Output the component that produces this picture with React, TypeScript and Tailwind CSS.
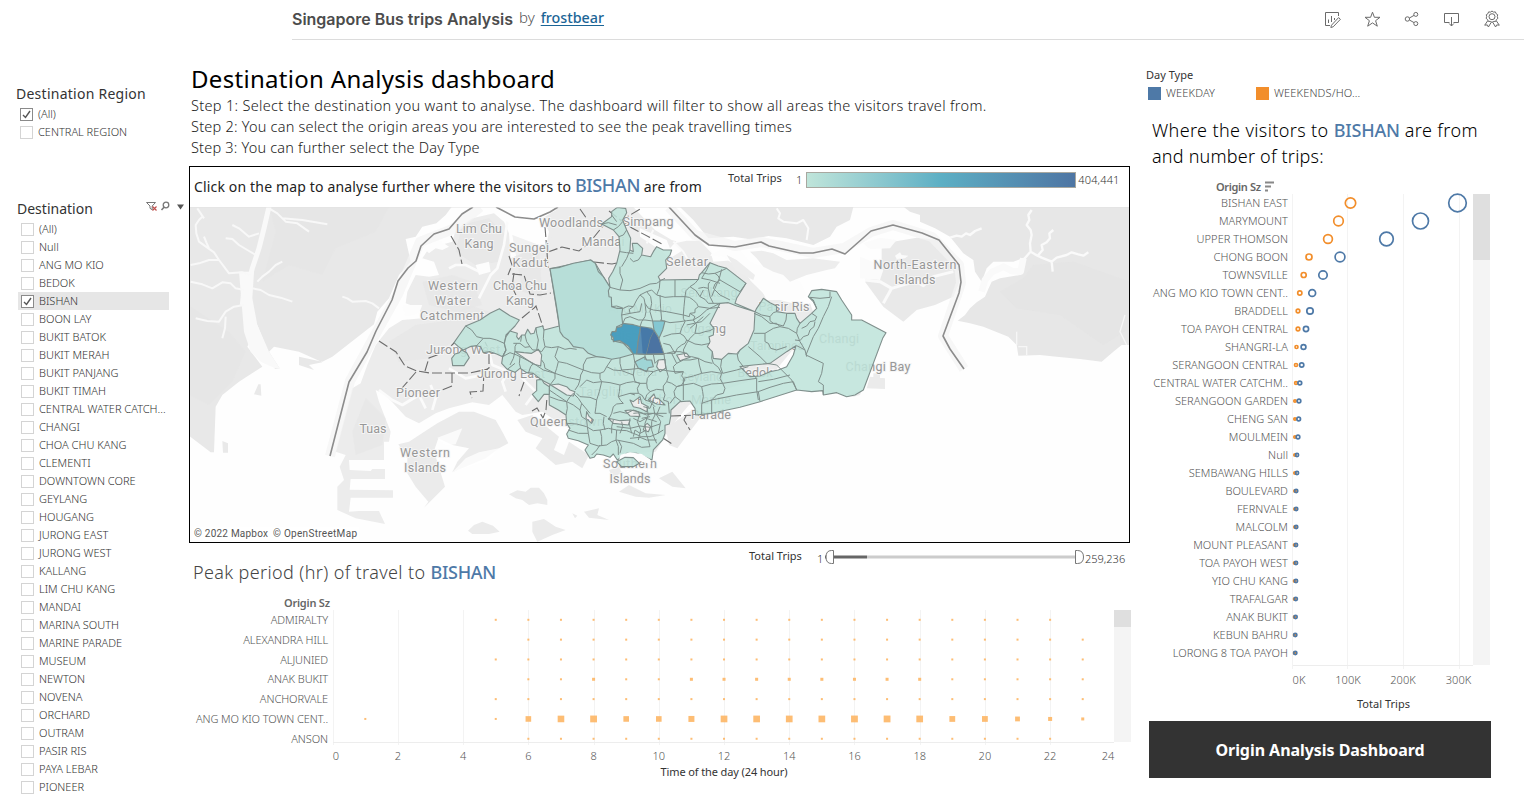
import React from "react";

const regions = ["(All)", "CENTRAL REGION"];

const destinations = [
  "(All)", "Null", "ANG MO KIO", "BEDOK", "BISHAN", "BOON LAY", "BUKIT BATOK", "BUKIT MERAH",
  "BUKIT PANJANG", "BUKIT TIMAH", "CENTRAL WATER CATCH...", "CHANGI", "CHOA CHU KANG", "CLEMENTI",
  "DOWNTOWN CORE", "GEYLANG", "HOUGANG", "JURONG EAST", "JURONG WEST", "KALLANG", "LIM CHU KANG",
  "MANDAI", "MARINA SOUTH", "MARINE PARADE", "MUSEUM", "NEWTON", "NOVENA", "ORCHARD", "OUTRAM",
  "PASIR RIS", "PAYA LEBAR", "PIONEER",
];

// name, weekend x, weekend radius, weekday x, weekday radius
const origins: [string, number, number, number, number][] = [
  ["BISHAN EAST", 1350.5, 5.2, 1457.5, 8.8],
  ["MARYMOUNT", 1338.5, 4.8, 1420.5, 8],
  ["UPPER THOMSON", 1328, 4.4, 1386.5, 6.8],
  ["CHONG BOON", 1309, 3, 1340, 4.9],
  ["TOWNSVILLE", 1303.7, 2.5, 1323, 4.2],
  ["ANG MO KIO TOWN CENT..", 1299.8, 2.1, 1312.2, 3.4],
  ["BRADDELL", 1298, 1.8, 1310, 3.2],
  ["TOA PAYOH CENTRAL", 1298, 1.8, 1306, 2.6],
  ["SHANGRI-LA", 1296.5, 1.5, 1303.5, 2.4],
  ["SERANGOON CENTRAL", 1296, 1.5, 1301.7, 2.1],
  ["CENTRAL WATER CATCHM..", 1296, 1.4, 1299.8, 1.9],
  ["SERANGOON GARDEN", 1295, 1.2, 1299, 1.8],
  ["CHENG SAN", 1295, 1.2, 1298.7, 1.8],
  ["MOULMEIN", 1295, 1.2, 1298, 1.8],
  ["Null", 1295, 1.2, 1297, 1.6],
  ["SEMBAWANG HILLS", 1295, 1.2, 1297, 1.6],
  ["BOULEVARD", 1295, 1.2, 1296.2, 1.6],
  ["FERNVALE", 1295, 1.2, 1296.2, 1.6],
  ["MALCOLM", 1295, 1.2, 1296.2, 1.6],
  ["MOUNT PLEASANT", 1294.7, 1.2, 1296, 1.6],
  ["TOA PAYOH WEST", 1294.7, 1.2, 1296, 1.6],
  ["YIO CHU KANG", 1294.7, 1.2, 1296, 1.6],
  ["TRAFALGAR", 1294.7, 1.2, 1295.8, 1.6],
  ["ANAK BUKIT", 1294.7, 1.2, 1295.6, 1.6],
  ["KEBUN BAHRU", 1294.7, 1.2, 1295.3, 1.6],
  ["LORONG 8 TOA PAYOH", 1294.7, 1.2, 1295.3, 1.6],
];

const small = (from: number, to: number) =>
  Array.from({ length: to - from + 1 }, (_, i): [number, number] => [from + i, 2]);

const peaks: { name: string; marks: [number, number][] }[] = [
  { name: "ADMIRALTY", marks: small(5, 22) },
  { name: "ALEXANDRA HILL", marks: small(6, 23) },
  { name: "ALJUNIED", marks: small(5, 23) },
  {
    name: "ANAK BUKIT",
    marks: small(6, 23).map(([h, s]): [number, number] => [h, h === 8 || (h > 10 && h < 19) ? 3 : s]),
  },
  { name: "ANCHORVALE", marks: small(5, 23) },
  {
    name: "ANG MO KIO TOWN CENT..",
    marks: [
      [1, 2], [5, 2], [6, 5.6], [7, 6.6], [8, 6.8], [9, 5.6], [10, 5.6], [11, 6], [12, 6.7], [13, 6.7],
      [14, 6.7], [15, 6.7], [16, 6.8], [17, 6.8], [18, 6.7], [19, 5.8], [20, 5.8], [21, 4.8], [22, 4], [23, 3],
    ],
  },
  { name: "ANSON", marks: small(6, 22) },
];

const mapLabels: [string, number, number, number][] = [
  ["Lim Chu", 479, 233, 46], ["Kang", 479, 248, 29], ["Sungei", 529, 252, 40], ["Kadut", 530, 267, 35],
  ["Woodlands", 571, 227, 64], ["Simpang", 648, 226, 51], ["Mandai", 603, 246, 43], ["Seletar", 687, 266, 42],
  ["Western", 453, 290, 50], ["Water", 453, 305, 36], ["Catchment", 452, 320, 64], ["Choa Chu", 520, 290, 54],
  ["Kang", 520, 305, 28], ["Jurong West", 463, 354, 74], ["Jurong East", 511, 378, 68], ["Pioneer", 418, 397, 44],
  ["Tuas", 373, 433, 27], ["Western", 425, 457, 50], ["Islands", 425, 472, 42], ["Queenstown", 567, 426, 74],
  ["Novena", 635, 376, 44], ["Tanglin", 601, 396, 44], ["Bishan", 633, 340, 38], ["Ang Mo Kio", 640, 313, 64],
  ["Sengkang", 709, 297, 57], ["Hougang", 700, 333, 52], ["Pasir Ris", 784, 311, 51], ["Tampines", 777, 350, 54],
  ["Bedok", 755, 377, 35], ["Changi", 839, 343, 40], ["Changi Bay", 878, 371, 65], ["Geylang", 701, 381, 44],
  ["Marine", 711, 404, 40], ["Parade", 711, 419, 40], ["Rochor", 657, 404, 40], ["Southern", 630, 468, 54],
  ["Islands", 630, 483, 41], ["North-Eastern", 915, 269, 83], ["Islands", 915, 284, 41],
];

function Checkbox({ checked }: { checked: boolean }) {
  return (
    <span className={`flex h-[13px] w-[13px] shrink-0 items-center justify-center border bg-white ${checked ? "border-[#8a8a8a]" : "border-[#d4d4d4]"}`}>
      {checked && (
        <svg width="9" height="9" viewBox="0 0 9 9" fill="none" stroke="#555" strokeWidth="1.4">
          <path d="M1 5 L3.5 7.5 L8 1" />
        </svg>
      )}
    </span>
  );
}

function Header() {
  return (
    <header className="ml-[292px] flex h-10 items-start justify-between border-b border-[#dcdcdc] pr-[23px]">
      <div className="flex h-10 items-center gap-[6px] pb-[3px] whitespace-nowrap">
        <h1 className="font-['Inter','Liberation_Sans',sans-serif] text-[16px] font-semibold tracking-[-0.01px] text-[#4c4c4c]">Singapore Bus trips Analysis</h1>
        <span className="-mt-[2px] text-[15px] font-light text-[#555]">by</span>
        <a className="-mt-[2px] text-[14.3px] font-medium text-[#1b6596] underline underline-offset-2">frostbear</a>
      </div>
      <div className="flex h-[38px] items-center gap-[23px] text-[#6b6b6b]">
        <svg width="17" height="17" viewBox="0 0 17 17" fill="none" stroke="currentColor">
          <path d="M14.5 5V1.5H1.5V14.5H6M4.5 8.5V12M7.5 5V11M10.5 7V9" />
          <path d="M7.5 14.2L14.6 6.6L16.4 8.3L9.2 15.8L6.8 16.5Z" />
        </svg>
        <svg width="17" height="17" viewBox="0 0 17 17" fill="none" stroke="currentColor">
          <path d="M8.5 1.2L10.4 6.3H16L11.6 9.7L13.3 15.2L8.5 11.9L3.7 15.2L5.4 9.7L1 6.3H6.6Z" />
        </svg>
        <svg width="16" height="16" viewBox="0 0 16 16" fill="none" stroke="currentColor">
          <circle cx="3.4" cy="8" r="2.2" /><circle cx="11.8" cy="3.4" r="2" /><circle cx="11.8" cy="12.6" r="2" />
          <path d="M5.4 7L10 4.4M5.4 9L10 11.6" />
        </svg>
        <svg width="17" height="16" viewBox="0 0 17 16" fill="none" stroke="currentColor">
          <path d="M6.5 11.5H1.5V2.5H15.5V11.5H10.5M8.5 6V15M6.2 12.5L8.5 15L10.8 12.5" />
        </svg>
        <svg width="18" height="18" viewBox="0 0 18 18" fill="none" stroke="currentColor">
          <path d="M9 1L10.5 2.1L12.4 1.9L13.1 3.7L14.7 4.7L14.3 6.6L14.9 8.3L13.4 9.6L12.8 11.4H10.9L9 12.3L7.3 11.4H5.3L4.6 9.6L3.1 8.3L3.7 6.6L3.3 4.7L4.9 3.7L5.6 1.9L7.5 2.1Z" />
          <circle cx="9" cy="6.7" r="3" />
          <path d="M4.7 10.8L1.7 15.2L4.3 14.9L5.4 17L8.3 12.2M13.3 10.8L16.3 15.2L13.7 14.9L12.6 17L9.7 12.2" />
        </svg>
      </div>
    </header>
  );
}

function Sidebar() {
  return (
    <aside className="w-[189px] shrink-0 text-[#333]">
      <h2 className="ml-4 mt-11 text-[14px] leading-5 tracking-[0.25px]">Destination Region</h2>
      <ul className="ml-5 mt-px text-[11px] font-light text-[#333]">
        {regions.map((r, i) => (
          <li key={r} className="flex h-[18px] items-center gap-[5px]">
            <Checkbox checked={i === 0} />
            {r}
          </li>
        ))}
      </ul>
      <div className="ml-[17px] mt-[58px] flex h-5 items-center">
        <h2 className="w-[128px] text-[14px] leading-5">Destination</h2>
        <svg width="40" height="14" viewBox="0 0 40 14" fill="none" stroke="#777" className="-mt-1 ml-px">
          <path d="M.5 2.5H9.5L6.2 6V9.8L4 8.3V6Z" /><path d="M6.500 6.500L10.500 10.500M10.500 6.500L6.500 10.500" stroke="#c0504d" strokeWidth="1.2" />
          <circle cx="20" cy="5" r="2.8" strokeWidth="1.3" /><path d="M18 7.2L15.5 10" strokeWidth="1.5" />
          <path d="M31 4.5H38L34.5 9.5Z" fill="#555" stroke="none" />
        </svg>
      </div>
      <ul className="ml-[18px] mt-px w-[151px] text-[11px] font-light">
        {destinations.map((d) => (
          <li key={d} className={`flex h-[18px] items-center gap-[5px] pl-[3px] whitespace-nowrap ${d === "BISHAN" ? "bg-[#e6e6e6]" : ""}`}>
            <Checkbox checked={d === "BISHAN"} />
            {d}
          </li>
        ))}
      </ul>
    </aside>
  );
}

function SingaporeMap() {
  return (
    <svg width="939" height="335" viewBox="190 207 939 335" className="block bg-[#fefefe]">
      {/* Johor west and the western half of the island */}
      <g transform="translate(189 165) scale(.33333)">
        <path fill="#e8e8e8" d="M0 123H790L770 150L742 175L700 185L680 215L650 222L665 290L630 330L600 400L565 440L555 478L430 575L400 590L330 575L330 600L375 615L360 600L400 592L330 560L255 545L240 560L272 610L258 612L205 480L175 545L220 605L150 650L100 690L80 725L75 862L65 862L0 812Z" />
        <path fill="#e4e4e4" d="M240 125H600L560 200L440 250L400 330L300 300L220 350L260 200Z M0 420L120 500L170 560L130 650L60 720L0 690Z" opacity=".45" />
        <path fill="none" stroke="#f9f9f9" strokeWidth="15" strokeLinejoin="round" d="M240 125L225 190L210 250L190 310L182 340L165 370L160 420" />
        <path fill="#f9f9f9" d="M150 320H195L190 400L205 480L240 560L272 610H258L215 590L185 560L165 500Z" />
        <path fill="none" stroke="#f8f8f8" strokeWidth="6" strokeLinejoin="round" d="M185 330L160 322L120 325L105 305L90 285L75 262L55 248L30 230L22 205L20 180L30 165L40 155M60 250L52 232L45 215M90 285L60 285L30 295L5 300M165 375L140 370L125 355L100 352L70 370L40 358L5 350M165 420L135 425L110 440L90 470L55 468L20 460M190 370L215 375L240 390L275 398L310 410M240 130L265 145L290 170L325 175L360 200M205 350L220 335L240 320L260 300L280 290M200 270L175 255L150 240L130 222L110 220M110 455L108 490L100 520M130 180L150 190L180 215L210 205M460 395L475 400L490 410L530 408L550 415L570 430M280 160L340 165L415 178M25 130L45 160" />
        <path fill="#e9e9e9" d="M195 688L208 658H215L217 692ZM100 828L117 835V863H102Z" />
        <path fill="#ececec" d="M850 160L915 145L945 170L960 205L965 280L1010 260L1070 250L1080 200L1060 160L1120 124L1733 400V605L1500 720L1450 780L1400 860L1250 870L1200 820L1120 780L1060 740L1000 750L980 740L940 690L900 720L850 712L780 730L740 745L690 775L650 755L590 690L560 675L570 710L605 800L600 830H585V885H480L482 915L545 918L550 912H588V942H485L482 974L612 976V998H485L480 1040L510 1038H570L588 1077L500 1060L445 1035L445 965L465 945L452 905L470 870L440 860L490 670L515 655L535 600L560 540L600 490L640 465L700 460L690 430L650 415L655 380L680 330L720 335L750 330L735 290L700 280L720 250L790 230L800 195Z" />
        <path fill="#e4e4e4" opacity=".5" d="M680 480L760 470L840 420L900 440L790 530L720 580L630 590L600 530ZM820 180L900 160L950 210L930 290L860 300L800 260Z" />
        <path fill="#e6e6e6" opacity=".55" d="M700 350L790 330L850 350L880 420L800 440L720 420ZM970 210L1050 240L1060 400L1000 380ZM530 700L590 760L580 840L500 870L490 800Z" />
        <path fill="none" stroke="#fbfbfb" strokeWidth="8" strokeLinejoin="round" d="M955 170L945 240L925 310L905 330L890 360L870 400M780 310L800 300L830 300L870 320M780 610L830 640L880 630M900 560L910 600L960 620L940 650L950 680M570 675L610 705L640 720L690 690L710 730M725 660L740 700L730 735M1000 640L1040 680L1010 720" />
        <path fill="#fdfdfd" d="M700 245L725 222L750 225L780 245L760 255L740 250L720 265ZM640 420L700 420L690 445L650 455ZM860 300L900 290L905 320L870 330Z" />
        <path fill="#ebebeb" d="M628 838L660 830L745 775L810 740L855 740L920 765L940 800L958 835L930 850L890 880L790 922L805 890L840 850L790 840L748 820L735 858L768 965L705 1028L718 1010L680 965L655 925L655 880Z" />
        <path fill="#fff" d="M790 922L900 885L930 850L870 862L830 880ZM745 818L820 790L800 838L770 842Z" opacity=".75" />
        <path fill="#ebebeb" d="M985 765L1030 750L1110 815L1095 855L1125 870L1140 830L1200 870L1180 910L1150 890L1100 900L1040 850L1060 820L1010 800ZM1430 790L1510 735L1540 750L1465 850L1440 840Z" />
        <path fill="#ebebeb" d="M960 988L985 976L1010 980L1025 968L1050 968L1065 985L1075 1005V1020L1045 1015L1020 1020L1000 1005L980 1000ZM837 1097L855 1080L880 1070L912 1082L932 1100L900 1107H850ZM1030 1070L1065 1062L1100 1085L1130 1095L1090 1110L1045 1130L1030 1100ZM1150 1045L1165 1052L1158 1060ZM1185 1040L1230 1030L1225 1050L1260 1065L1200 1058ZM1290 980L1320 960L1370 985L1430 990L1380 998L1340 995ZM1410 940L1450 920L1490 970L1450 965ZM1260 915L1290 905L1300 925L1270 935Z" />
      </g>

      {/* Northern shore and eastern islands */}
      <g transform="translate(640 200) scale(.33333)">
        <path fill="#ececec" d="M-250 21H-20L45 90L95 120L130 130L210 150L220 185L290 180L345 225L330 240L380 290L500 320L515 380L400 520L100 620L-200 640L-280 200Z" />
        <path fill="#fdfdfd" d="M0 85L80 120L90 145L110 122L190 128L220 160L240 150L300 150L330 185L400 210L480 245L500 285L480 300L380 300L365 270L340 250L310 215L250 170L180 165L130 150L90 175L60 150L0 110Z" />
        <path fill="#e8e8e8" d="M120 21H640L630 60L590 80L570 110L520 135L440 115L385 108L330 118L280 110L205 115L160 60Z" />
        <path fill="#ededed" d="M330 155L365 152L400 160L440 180L520 175L600 185L585 205L560 210L500 225L450 245L430 225L400 215L370 200L350 175ZM105 130L140 122L180 122L215 160L200 185L155 180ZM260 165L290 180L345 225L340 240L290 215Z" />
        <path fill="none" stroke="#fafafa" strokeWidth="6" strokeLinejoin="round" d="M410 25L420 40L415 55L430 65L470 70L490 60L505 85L500 120M100 125L130 155L150 190M40 90L20 130" />
        <path fill="#ebebeb" d="M470 340L510 310L525 350L490 375ZM690 530L735 535L735 567L680 565ZM700 535V520H720V545ZM620 585L665 570L660 585L640 590Z" />
      </g>
      <g transform="translate(860 165) scale(.33333)">
        <path fill="#e7e7e7" d="M130 125H808V540L785 540L760 560L725 590L660 582L590 575L540 570L475 572L470 540L445 515L400 497L370 485L330 475L293 467L315 450L330 430L350 412L375 395L385 372L395 350L420 340L480 330L500 275L460 290L400 290L380 310L365 350L345 320L340 285L310 265L290 240L270 215L225 190L180 170L180 150L150 140Z" />
        <path fill="#e3e3e3" opacity=".5" d="M520 300L640 290L808 350V490L730 540L600 450L470 430L420 380L490 340Z" />
        <path fill="none" stroke="#fafafa" strokeWidth="7" strokeLinejoin="round" d="M515 135L505 150L508 165L500 180L512 195L515 210L510 235L512 260L525 268L545 278L575 290L590 278L620 270L635 262L655 268L670 272L685 262M535 270L548 255L545 240L560 232L570 220L568 205L580 195M575 290L578 320M270 218L290 212L305 215L318 205L330 210L345 198L365 190M510 262L485 290L480 325" />
        <path fill="none" stroke="#fafafa" strokeWidth="20" strokeLinejoin="round" d="M365 380L375 345L395 322L430 305L455 318L482 320L490 280" />
        <path fill="none" stroke="#f6f6f6" strokeWidth="4" d="M470 500V540M475 545L500 545V570M795 450L780 500L800 540" />
        <path fill="#e9e9e9" d="M65 250L100 230L170 218L235 225L290 290L300 345L280 395L225 420L170 435L130 470L70 425L15 350L50 335L65 300Z" />
        <path fill="#fbfbfb" d="M10 235L60 218L110 225L90 250L30 252ZM0 275L50 295L70 315L60 345L0 340ZM105 272L120 262L125 270L145 272L135 280L110 282Z" />
        <path fill="none" stroke="#fafafa" strokeWidth="9" strokeLinejoin="round" d="M15 345L60 350L95 370L70 415M95 370L135 358L170 350L190 362L220 335L280 320" />
      </g>

      {/* Maritime border and rail lines */}
      <g fill="none" stroke="#f3f3f3" strokeWidth="10" strokeLinejoin="round" opacity=".7">
        <path d="M330 456L350 381L375 335L398 294L420 242L453 229L480 207" />
        <path d="M669 207L695 235L735 246L761 242L813 253L844 248L871 232L893 225L932 237L959 265L961 283L943 336L964 369" />
      </g>
      <g fill="none" stroke="#8c8c8c" strokeWidth="1.6" strokeLinejoin="round">
        <path d="M330 456L349 382L367 352L376 331L392 300L398 281L408 268L416 261L421 246L434 234L449 229L462 214L473 207" />
        <path d="M496 207L515 217L534 219L550 212L558 207" />
        <path d="M669 207L695 235L709 245L735 247L761 242L769 246L800 253L813 253L832 249L845 254L871 231L893 225L922 233L939 240L959 265L961 282L959 293L943 336L950 349L964 369" />
      </g>
      <g fill="none" stroke="#6c6c6c" strokeWidth="1.1" strokeDasharray="10 3">
        <path d="M379 341L396 352L405 366L417 371L430 373L470 373L488 369M416 372L402 388M452 373L452 386L442 390M484 371L483 391L470 392L472 398M425 371L429 358L437 355L452 345L455 342" />
        <path d="M451 236L459 250L462 264M509 256L512 265L508 275M512 274L524 275L530 294L540 295L551 293M522 318L534 308L536 306L543 327M545 227L547 252L548 268M548 252L562 247L579 251L590 242L603 226M594 262L612 264L617 263M580 209L587 219M609 211L623 222L632 228L664 245M620 221L642 208M524 382L519 396M532 411L537 408L543 418L546 410L547 397M514 273L512 287L520 303" />
        <path d="M485 342L489 350L489 368L480 374M671 416L700 415M686 416L684 420L690 430M663 438L672 444" />
      </g>

      {/* Place names */}
      <g textAnchor="middle" fontSize="12.5" fill="#979797" stroke="#f5f5f5" strokeWidth="2" paintOrder="stroke" className="font-['Roboto',sans-serif]">
        {mapLabels.map(([name, x, y, w], i) => (
          <text key={i} x={x} y={y} textLength={w}>{name}</text>
        ))}
      </g>

      {/* Planning subzones */}
      <g transform="translate(400 200) scale(.33333)" stroke="#7f8f8c" strokeWidth="3.3" strokeLinejoin="round">
        <g fill="#bfe4da" fillOpacity=".87">
          <path d="M197 378L240 360L270 340L298 326L330 347L358 360L345 378L318 405L313 430L318 450L308 470L290 462L270 455L250 458L242 440L230 437L210 440L190 450L175 440L162 428L178 405Z" />
          <path d="M165 462L178 458L185 450L200 458L208 473L192 497H158L155 475Z" />
          <path fillRule="evenodd" d="M450 206L572 180L586 190L610 230L630 262L626 235L638 215L650 190L660 150L657 110L640 90L605 72L635 50L635 35L652 22L677 25L680 38L668 60L680 90L692 115L690 150L700 155L697 130L712 130L728 145L725 165L752 170L760 155L770 140L790 150L815 150L810 165L797 180L800 205L775 230L780 240L895 238L898 225L905 218L930 188L955 198L980 205L1038 250L1010 295L1005 310L1065 335L1070 325L1090 295L1110 308L1130 318V335L1160 340H1185L1190 355L1200 370L1235 340L1250 325L1240 305L1225 290L1235 272L1265 268L1310 275L1325 300L1355 345V360L1385 360L1458 398L1448 415L1390 570L1365 585L1340 590L1310 578L1270 585L1268 572L1235 575L1190 570L1080 605L1020 622L935 640L887 645L885 625L870 603L840 605L813 630L812 650L808 672L795 676V700L788 720L760 750L756 780L710 760L680 760L652 780L640 762L630 772L610 765L590 762L582 772L570 775L555 750L565 735L535 722L505 715L500 702L510 685L500 670L498 645L475 630L448 615L447 565L450 553L425 540L400 520L380 518L360 505L345 517L322 508L305 490L308 470L318 450L313 430L318 410L330 393L352 400L350 410L356 418L365 405L375 405L383 388L392 402L402 400L408 383L428 378L432 390L478 378Z
            M345 455L372 458L395 460L415 448L425 465L422 498L400 492L375 475Z
            M452 555L475 552L500 560L510 570L525 575L520 588L500 585L480 572Z
            M960 310L985 308L1010 318L1065 335L1062 390L1045 430L1020 450L1010 462L985 460L965 478L940 475L937 455L922 440L930 425L927 410L940 405L942 385L930 370L945 340Z
            M1020 500L1060 495L1110 490L1160 455L1188 437L1180 465L1160 500L1135 510L1110 515L1080 528L1050 530L1035 515Z
            M775 480L795 478L797 505L780 515L770 500Z M830 465L860 460L870 472L840 482Z
            M690 600L700 605L720 590L725 610L745 620L740 635L720 625L700 620Z M675 632L692 630L715 635L720 650L690 648Z
            M560 635L568 650L580 660L575 670L558 655Z M625 655L660 662L690 660L685 675L640 670Z M735 675L742 670L752 680L745 695L730 690Z
            M745 600L762 582L767 595L775 595L795 615L770 612Z" />
          <path d="M410 540L425 538L432 550L448 560V583H432L415 605L397 583L410 572Z" />
        </g>
        <path fill="#fdfdfd" stroke="none" d="M656 782L662 764L690 757L725 762L750 778L752 792L725 785L700 770L675 768Z" />
        <path fill="#bfe4da" fillOpacity=".87" d="M650 785L675 772L700 773L718 790L700 800L665 800Z" />
        <path fill="#b5ddd7" fillOpacity=".88" d="M450 206L480 202L520 190L572 180L586 190L595 215L610 230L630 262L625 272L627 290L634 292L635 320L650 325L668 325L665 345L668 372L650 380L648 392L635 400V418L650 425L670 430L685 445L700 462L660 473L635 478L610 472L590 470L565 460L550 445L520 440L505 420L490 410L480 395L475 355L468 310L462 275Z" />
        <path fill="#4099bc" fillOpacity=".93" d="M668 370L700 374L722 380L715 420L710 462H700L685 438L660 422L640 425L640 413L632 405L636 395L648 395L650 382L665 380Z" />
        <path fill="#5489b2" fillOpacity=".95" d="M722 380L755 385L762 392L750 415L738 463L710 462L715 420Z" />
        <path fill="#466e9f" fillOpacity=".96" d="M762 390L775 410L792 463H738L750 415Z" />
        <path fill="#4477a6" fillOpacity=".9" d="M722 382L740 383L762 392L750 415L738 463L728 460Z" stroke="none" />
        <path fill="#7cc3d0" fillOpacity=".9" d="M758 363H795L788 390L777 415L762 390Z" />
        <path fill="#98d2d5" fillOpacity=".85" d="M705 485L735 470L740 480L755 480L760 500L745 503L740 515L715 505Z" />

        <g fill="none" strokeWidth="3">
          <path d="M197 378L215 390L230 410L250 415L270 415L290 420L313 430M230 437L250 415M318 450L308 470M308 470L330 458L350 465L400 490L430 510L465 520M330 495L340 475L345 455M322 508L345 490M360 470L358 490L362 505M400 490L392 500L385 520M340 430L360 430L375 442L390 440L398 450L410 450L425 455M345 455L345 440L350 430M375 405L380 425L390 440M365 405L362 425M408 383L410 400L415 420L410 450M432 390L430 415L435 440L425 455" />
          <path d="M435 440L455 443L475 440L495 448L510 445L530 448M425 480L432 490L435 505L465 520L470 505L475 485L500 490L550 510L550 495L560 475L590 470M475 485L465 470L475 440M465 520L465 535L450 555M465 520L500 532L540 540L542 525L550 510L575 518L600 520L612 515L620 500L635 478M540 540L535 555L525 570M600 520L600 535L605 545L580 548L560 540L540 560M605 545L630 548L660 555L680 548L700 545L720 550M620 500L640 510L665 512L700 525L705 545M660 473L660 490L665 510M700 462L705 490L700 525M605 545L598 575L590 600L570 592L540 590L530 580M590 600L588 620L585 640L600 640L620 650M660 555L658 575L655 590L662 602L670 610L650 612L640 620L635 640L625 660M655 590L690 580L705 585" />
          <path d="M448 590L475 600L500 605L510 590L520 580M500 605L502 625L498 645M448 570L470 585L500 605M500 605L520 615L540 630L545 650L560 660L562 680L565 700M520 580L535 595L545 610L570 640M545 610L540 630M500 670L530 672L560 680L580 692L600 690L625 685L650 690L680 692L700 700L725 710L750 710L770 702L790 690M565 700L570 730L595 738L620 735L635 725L650 720L675 725L700 730L725 742L750 740M600 690L605 710L605 735M565 700L535 700L505 690M650 690L648 720L655 740L655 765" />
          <path d="M612 650L610 670L615 690M640 660L635 680L635 700M665 665L668 680L660 700M690 655L688 672L695 700M720 640L712 665L722 690L715 720M740 620L745 645L735 670L738 700L745 720L750 740M760 620L765 645L755 665L755 690L762 712L770 730M780 620L770 645L782 665L775 700M700 640L720 638L740 645L760 640L790 650M650 680L690 685L720 678L750 682L780 672M690 715L720 712L740 720L770 720M640 640L660 635L680 640L700 630L730 640L760 640L800 640M660 760L665 740L655 720M575 765L590 750L600 735M720 700L740 690M700 655L720 665L738 655L770 665M700 710L705 690L720 700M760 600L750 625L730 620M725 655L750 650" />
          <path d="M712 462L740 463L800 460L820 455L840 455L860 460M735 463L735 480M760 463L765 490L775 480M665 510L690 508L720 505L735 512L760 515L780 508L800 512L825 515L850 515M705 545L720 550L740 550L742 535L750 525L760 515M740 550L742 565L750 575L770 568L790 570L790 558L800 545L805 530L800 512M750 575L740 585L735 600L750 605L765 620M790 600L795 585L790 570M720 550L712 565L715 580L725 585L735 600M690 580L715 580M800 545L815 550L830 560L845 555L855 540L845 528L850 515M830 560L822 575L825 590L810 610M790 600L805 605L808 640M825 590L845 605" />
          <path d="M630 262L660 270L690 272L720 265L750 252L770 250L785 240L795 235M660 200L660 220L668 240L660 270M690 150L680 175L665 200M660 155L680 158L700 160M725 165L715 180L700 185L690 175M640 90L655 80L668 65M605 72L625 68L650 75M635 45L650 65M680 90L670 105L657 110M635 320L650 318L670 325L685 318L700 320L710 300L720 285L740 275L755 270L770 285L778 265L780 240M700 320L688 328L690 340L720 335L725 310M720 285L732 295L735 310L738 335L735 350L725 365L720 380M668 372L675 355L690 350L715 360L735 360L758 363M665 345L690 340M735 310L745 325L760 330L800 335L850 345M740 275L752 290L755 310L750 335L758 363M780 285L782 325L785 360M770 285L795 292L820 290L855 290L852 320L850 345M825 240V290M855 290L868 292L880 300L890 310L895 320L885 328L885 338L870 340L868 350L850 345" />
          <path d="M780 360L810 368L840 365L860 362L880 360L900 348L920 330L940 320L960 310M850 345L850 355L855 365L845 385L840 400L815 402L790 410M840 400L852 408L860 420L855 430L845 435L832 445L825 460M860 420L885 432L905 435L930 430M880 360L890 375L885 400L870 415L860 430L850 450L855 470M885 400L900 400L915 395L930 392L942 385M895 320L930 325L960 322M870 340L885 350L880 360M790 430L810 435L825 460L800 460M855 290L858 272L870 260L885 250L895 238M870 260L888 272L900 290L915 298L925 310L960 310M895 265L910 262L925 265L925 252L930 245M905 218L925 222L945 220L965 212L980 205M945 220L955 228L960 240L1020 275L1038 250M960 240L945 252L940 265L960 285L990 300M925 265L930 290L940 310M930 188L920 210L905 235L930 240L960 250M965 208L958 235L945 265L935 290M900 290L905 280L910 270M860 375L905 365L930 340M870 385L910 350" />
          <path d="M792 463L795 485L800 512M815 460L830 490L820 500L825 520L850 515M830 490L850 480L870 480L895 475L915 485L937 490M855 470L875 470L895 475L898 495L905 520L880 528L850 535M905 520L935 515L965 520L960 535L968 550L935 552L905 560L880 550L850 555L830 560M937 455L935 475L940 490L955 502L965 520M905 560L908 575L910 590L905 615L905 645M850 535L850 600M965 478L962 500L968 520L1010 510L1045 500M968 550L1020 542L1070 535L1070 570L1075 600M905 610L935 600L1010 585L1075 575L1080 605M1020 450L1012 465L1015 480L1030 500M1070 535L1060 525M968 550L975 565L970 580L950 585L935 600L935 640M1075 575L1110 562L1150 550L1180 545L1190 570M1075 545L1120 538L1170 525M1045 440L1080 470L1100 490L1130 495L1160 525L1175 540L1190 570M1062 400L1095 400L1120 385L1140 380L1130 370L1110 370L1085 350L1062 340M1065 335L1085 345L1110 350L1120 338L1130 335M1110 350L1110 362L1120 370L1150 378L1158 360L1160 340M1095 400L1095 425L1105 430L1112 445L1130 450L1160 440M1140 380L1165 385L1190 400L1200 425L1215 450L1220 470M1215 450L1190 437M1190 400L1192 385L1200 370M1205 385L1220 378L1230 365L1245 362L1250 350L1235 340M1185 420L1200 422L1210 410L1225 405L1230 390L1242 380L1245 365M1230 292L1260 295L1290 292L1290 275M1295 290L1285 320L1270 350L1255 385L1240 410L1218 465L1245 478L1270 490L1265 520L1255 545L1270 555L1270 585M1225 290L1240 300L1250 325" />
        </g>
      </g>

      <rect x="192" y="527" width="167" height="13" fill="#fff" opacity=".7" />
      <text x="194" y="537" fontSize="10" fill="#555" textLength="74" className="font-['Roboto',sans-serif]">© 2022 Mapbox</text>
      <text x="273" y="537" fontSize="10" fill="#555" textLength="84" className="font-['Roboto',sans-serif]">© OpenStreetMap</text>
      <path d="M190 207H1129" stroke="#e2e2e2" />
    </svg>
  );
}

function MapPanel() {
  return (
    <section className="h-[377px] w-[941px] border border-black">
      <div className="flex h-10 items-start">
        <p className="ml-1 mt-[6px] w-[534px] text-[14px] leading-6 tracking-[0.16px] whitespace-nowrap text-[#222]">
          Click on the map to analyse further where the visitors to <span className="text-[18px] font-medium tracking-[-0.35px] text-[#4e79a7]">BISHAN</span> are from
        </p>
        <span className="mt-[3px] w-[68px] text-[11px] leading-4 tracking-[0.1px] text-[#333]">Total Trips</span>
        <span className="mt-[5px] text-[11px] font-light leading-4 text-[#333]">1</span>
        <span className="ml-[4px] mt-[5px] h-4 w-[270px] border border-[#a8a8a0] bg-linear-to-r from-[#bfe5da] via-[#5cafc4] to-[#4e75a3]" />
        <span className="ml-[2px] mt-[5px] text-[11px] font-light leading-4 tracking-[0.15px] text-[#333]">404,441</span>
      </div>
      <SingaporeMap />
    </section>
  );
}

function TripSlider() {
  return (
    <div className="ml-[560px] mt-1 flex h-5 items-center text-[11px] whitespace-nowrap text-[#333]">
      <span className="-mt-px w-[68px]">Total Trips</span>
      <span className="mt-1 w-2 font-light">1</span>
      <svg width="260" height="14" viewBox="0 0 260 14" className="-mt-px">
        <path d="M9 7H51" stroke="#666" strokeWidth="3" transform="translate(-9 0)" />
        <path d="M42 7H250" stroke="#ccc" strokeWidth="3" />
        <path d="M8.5 .5H6.500Q1 .5 1 7T6.500 13.500H8.500Z M250.500 .5H252.500Q258.500 .5 258.500 7T252.500 13.500H250.500Z" fill="#fff" stroke="#777" />
      </svg>
      <span className="mt-1 font-light">259,236</span>
    </div>
  );
}

function PeakChart() {
  const x = (h: number) => 332.7 + h * 32.61;
  const y = (i: number) => 620 + i * 19.83;
  return (
    <svg width="943" height="185" viewBox="189 595 943 185" className="block font-['Noto_Sans',sans-serif]">
      {[0, 2, 4, 6, 8, 10, 12, 14, 16, 18, 20, 22].map((h) => (
        <path key={h} d={`M${Math.round(x(h)) + 0.5} 610V745`} stroke="#f3f3f3" />
      ))}
      <path d="M333 742.500H1114" stroke="#ededed" />
      <text x="330" y="607" textAnchor="end" fontSize="11" fontWeight="600" fill="#666" textLength="46">Origin Sz</text>
      {peaks.map((row, i) => (
        <g key={row.name}>
          <text x="328" y={y(i) + 4} textAnchor="end" fontSize="11" fontWeight="300" fill="#555" letterSpacing="-.08">{row.name}</text>
          {row.marks.map(([h, s]) => (
            <rect key={h} x={x(h) - s / 2} y={y(i) - s / 2 - 0.2} width={s} height={s} fill="#fdb768" fillOpacity=".92" />
          ))}
        </g>
      ))}
      {[0, 2, 4, 6, 8, 10, 12, 14, 16, 18, 20, 22, 24].map((h) => (
        <text key={h} x={h === 0 ? 336 : h === 24 ? 1108 : x(h)} y="760" textAnchor="middle" fontSize="11" fontWeight="300" fill="#555">{h}</text>
      ))}
      <text x="724" y="776" textAnchor="middle" fontSize="11" fill="#333" textLength="127">Time of the day (24 hour)</text>
      <rect x="1114" y="610" width="17" height="132" fill="#f4f4f4" />
      <rect x="1114" y="610" width="17" height="17" fill="#dfdfdf" />
    </svg>
  );
}

function OriginChart() {
  return (
    <svg width="343" height="541" viewBox="1148 180 343 541" className="block font-['Noto_Sans',sans-serif]">
      <text x="1216" y="191" fontSize="11" fontWeight="600" fill="#666" textLength="45">Origin Sz</text>
      <path d="M1265 182.500H1274M1265 186.500H1271M1265 190.500H1268" stroke="#888" strokeWidth="2" />
      {[1292.5, 1347.5, 1403.5, 1459.5].map((x) => (
        <path key={x} d={`M${x} 194V669`} stroke="#f3f3f3" />
      ))}
      <path d="M1293 665.500H1473" stroke="#ededed" />
      {origins.map(([name, ox, or, bx, br], i) => (
        <g key={name} fill="none" strokeWidth="1.7">
          <text x="1288" y={207 + i * 18} textAnchor="end" fontSize="11" fontWeight="300" fill="#555" letterSpacing=".05">{name}</text>
          <circle cx={ox} cy={203 + i * 18} r={or} stroke="#f28e2b" />
          <circle cx={bx} cy={203 + i * 18} r={br} stroke="#4e79a7" />
        </g>
      ))}
      <g fontSize="11" fontWeight="300" fill="#555" textAnchor="middle">
        <text x="1299" y="684">0K</text>
        <text x="1348" y="684">100K</text>
        <text x="1403" y="684">200K</text>
        <text x="1458.500" y="684">300K</text>
      </g>
      <text x="1383.500" y="708" textAnchor="middle" fontSize="11" fill="#333" textLength="53">Total Trips</text>
      <rect x="1473" y="194" width="17" height="471" fill="#f4f4f4" />
      <rect x="1473" y="194" width="17" height="66" fill="#dfdfdf" />
    </svg>
  );
}

export default function App() {
  return (
    <div className="h-[802px] w-[1524px] overflow-hidden bg-white font-['Noto_Sans','Open_Sans',sans-serif]">
      <Header />
      <div className="flex">
        <Sidebar />
        <main className="w-[941px] shrink-0">
          <h1 className="ml-[2px] mt-[22px] h-[33px] text-[24px] leading-[34px] tracking-[0.3px] whitespace-nowrap text-black">Destination Analysis dashboard</h1>
          <div className="ml-[2px] h-[71px] text-[14.5px] font-light leading-[21px] whitespace-nowrap text-[#222]">
            <p className="tracking-[0.32px]">Step 1: Select the destination you want to analyse. The dashboard will filter to show all areas the visitors travel from.</p>
            <p className="tracking-[0.22px]">Step 2: You can select the origin areas you are interested to see the peak travelling times</p>
            <p className="tracking-[0.19px]">Step 3: You can further select the Day Type</p>
          </div>
          <MapPanel />
          <div className="flow-root h-[52px]">
            <TripSlider />
            <h2 className="ml-1 -mt-[10px] h-[30px] text-[18px] font-light leading-[30px] tracking-[0.37px] whitespace-nowrap text-[#444]">
              Peak period (hr) of travel to <span className="font-medium tracking-[-0.3px] text-[#4e79a7]">BISHAN</span>
            </h2>
          </div>
          <PeakChart />
        </main>
        <section className="ml-[18px] w-[343px] shrink-0">
          <h3 className="-ml-[2px] mt-[27px] text-[11px] leading-4 text-[#333]">Day Type</h3>
          <div className="mt-px flex h-[18px] items-center text-[11px] font-light tracking-[0.15px] text-[#444]">
            <span className="flex w-[108px] items-center gap-[5px]"><span className="h-[13px] w-[13px] bg-[#4e79a7]" />WEEKDAY</span>
            <span className="flex items-center gap-[5px]"><span className="h-[13px] w-[13px] bg-[#f28e2b]" />WEEKENDS/HO...</span>
          </div>
          <h2 className="ml-1 mt-[15px] h-[63px] text-[18px] font-light leading-[26px] tracking-[0.38px] whitespace-nowrap text-black">
            Where the visitors to <span className="font-medium tracking-[-0.2px] text-[#4e79a7]">BISHAN</span> are from
            <br />
            <span className="tracking-[0.2px]">and number of trips:</span>
          </h2>
          <OriginChart />
          <button className="ml-px flex h-[57px] w-[342px] items-center justify-center bg-[#333] text-[16px] font-bold tracking-[-0.05px] text-white">Origin Analysis Dashboard</button>
        </section>
      </div>
    </div>
  );
}
